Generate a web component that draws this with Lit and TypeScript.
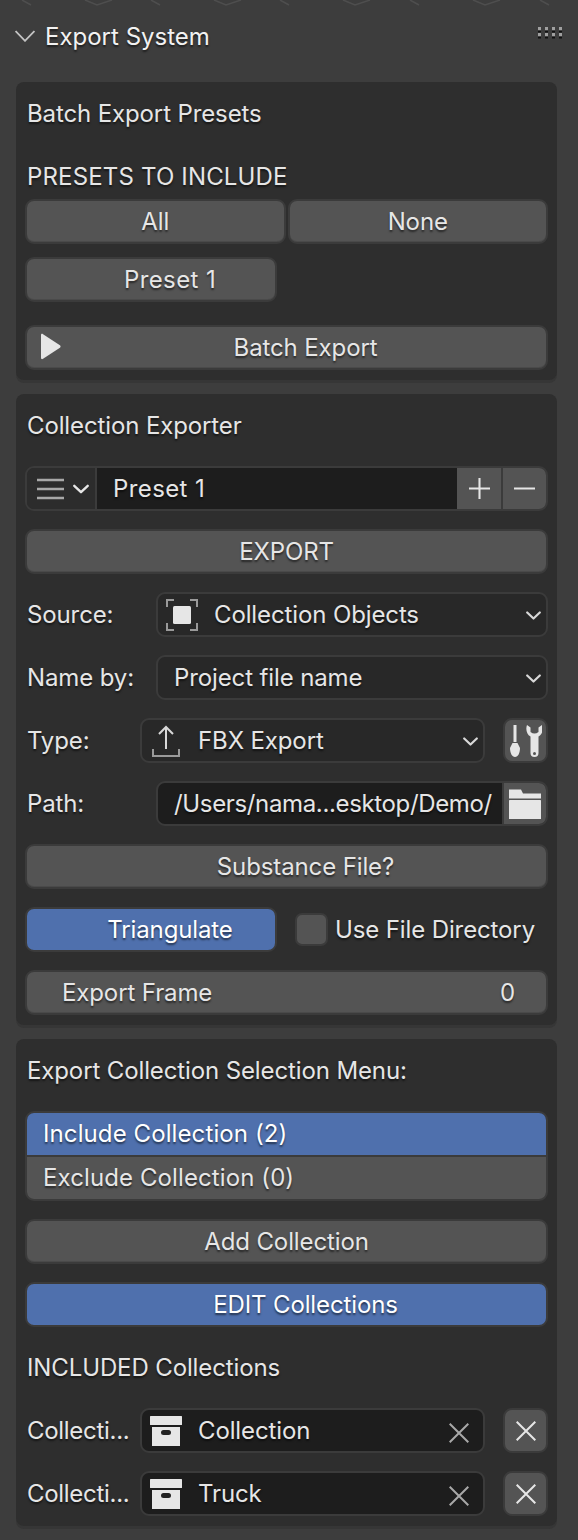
import { LitElement, css, html, svg } from "lit";
import { customElement } from "lit/decorators.js";

const chevron = svg`<path d="M1.200 1.500 7.500 7.500 13.800 1.500" fill="none" stroke="currentColor" stroke-width="2.200" stroke-linecap="round" stroke-linejoin="round"/>`;

const archiveIcon = html`<svg class="ico" viewBox="0 0 32 32" width="32" height="32">
  <rect x="0" y="1" width="32" height="9" rx="0.500" fill="#e6e6e6"/>
  <path d="M2 12h28v19H2z" fill="#e6e6e6"/>
  <rect x="11" y="15" width="10" height="5" rx="2.500" fill="#222"/>
</svg>`;

const closeIcon = html`<svg viewBox="0 0 20 20" width="20" height="20">
  <path d="M.7.7 19.300 19.300M19.300.7.7 19.300" stroke="currentColor" stroke-width="2" fill="none"/>
</svg>`;

const caret = html`<svg class="caret" viewBox="0 0 15 9" width="15" height="9">${chevron}</svg>`;

@customElement("app-root")
export class AppRoot extends LitElement {
  static styles = css`
    :host {
      display: block;
      width: 578px;
      height: 1540px;
      overflow: hidden;
      position: relative;
      background: #3d3d3d;
      font-family: Inter, "Liberation Sans", sans-serif;
      font-size: 24px;
      letter-spacing: -0.12px;
      color: #e6e6e6;
      text-shadow: 0 2px 2px rgba(0, 0, 0, 0.55);
    }
    * {
      box-sizing: border-box;
    }
    .strip {
      position: absolute;
      left: 0;
      top: 0;
      display: block;
    }
    .header {
      height: 82px;
      padding: 0 16px 10px 15px;
      display: flex;
      align-items: center;
      gap: 10px;
      letter-spacing: 0;
      color: #f2f2f2;
    }
    .header .grip {
      margin-left: auto;
      margin-top: -6px;
    }
    .panel {
      margin: 0 21px 14px 16px;
      padding: 9px 9px 10px 9px;
      background: #2e2e2e;
      border-radius: 8px;
      box-shadow: 0 3px 0 #363636;
      display: flex;
      flex-direction: column;
      gap: 18px;
    }
    .title,
    .row,
    .btn {
      height: 45px;
    }
    .title {
      display: flex;
      align-items: center;
      padding-left: 2px;
    }
    .caps {
      letter-spacing: 0.16px;
    }
    .row {
      display: flex;
      align-items: center;
    }
    .btn {
      flex: 1;
      display: flex;
      align-items: center;
      justify-content: center;
      background: #545454;
      border: 2px solid #3b3b3b;
      border-radius: 9px;
      box-shadow: inset 0 -1px 0 #4a4a4a;
      position: relative;
    }
    .btn.on {
      background: #4f70ad;
      color: #fff;
      box-shadow: none;
    }
    .btn.shift {
      padding-left: 38px;
    }
    .pair {
      gap: 2px;
      margin-top: -18px;
    }
    .half {
      flex: none;
      width: 252px;
    }
    .tight {
      margin-top: -5px;
    }
    .wide {
      margin-top: 5px;
    }
    .wider {
      letter-spacing: 0.4px;
    }
    .play {
      position: absolute;
      left: 12px;
      top: 6px;
    }
    .label {
      flex: none;
      padding-left: 2px;
    }
    .w131 {
      width: 131px;
    }
    .w115 {
      width: 115px;
    }
    .cut {
      letter-spacing: -0.3px;
    }
    .field {
      flex: 1;
      min-width: 0;
      height: 45px;
      display: flex;
      align-items: center;
      background: #282828;
      border: 2px solid #3b3b3b;
      border-radius: 9px;
      padding-left: 16px;
      position: relative;
      white-space: nowrap;
    }
    .field.ink {
      background: #1d1d1d;
    }
    .field.iconic {
      padding-left: 8px;
      gap: 16px;
    }
    .caret {
      position: absolute;
      right: 5px;
      top: 17px;
      color: #d8d8d8;
    }
    .ico {
      flex: none;
    }
    .square {
      flex: none;
      width: 45px;
      height: 45px;
      margin-left: 18px;
      background: #545454;
      border: 2px solid #3b3b3b;
      border-radius: 9px;
      display: flex;
      align-items: center;
      justify-content: center;
    }
    .clear {
      position: absolute;
      right: 14px;
      top: 10px;
      height: 20px;
      color: #a8a8a8;
    }
    .list {
      flex: 1;
      height: 45px;
      display: flex;
      align-items: stretch;
      border: 2px solid #3b3b3b;
      border-radius: 9px;
      overflow: hidden;
    }
    .list > div {
      display: flex;
      align-items: center;
      justify-content: center;
      background: #545454;
    }
    .list > .menu {
      flex: none;
      width: 70px;
      gap: 9px;
      padding-left: 4px;
      background: #2c2c2c;
      border-right: 2px solid #3b3b3b;
    }
    .list > .name {
      flex: 1;
      justify-content: flex-start;
      padding-left: 16px;
      background: #1d1d1d;
    }
    .list > .op {
      flex: none;
      width: 44px;
    }
    .list > .op + .op {
      width: 45px;
      border-left: 2px solid #3b3b3b;
    }
    .path {
      padding-right: 44px;
      overflow: hidden;
      letter-spacing: -0.35px;
    }
    .folder {
      position: absolute;
      right: 0;
      top: 0;
      bottom: 0;
      width: 44px;
      display: flex;
      align-items: center;
      justify-content: center;
      background: #545454;
      border-left: 2px solid #3b3b3b;
    }
    .check {
      flex: none;
      width: 33px;
      height: 33px;
      margin: 0 7px 0 18px;
      background: #545454;
      border: 2px solid #3b3b3b;
      border-radius: 7px;
    }
    .number {
      justify-content: space-between;
      padding: 0 31px 0 35px;
    }
    .tabs {
      height: 90px;
      display: flex;
      flex-direction: column;
      border: 2px solid #3b3b3b;
      border-radius: 9px;
      overflow: hidden;
      letter-spacing: 0.1px;
    }
    .tabs div {
      flex: 1;
      display: flex;
      align-items: center;
      padding: 0 0 2px 16px;
      background: #545454;
    }
    .tabs .on {
      background: #4f70ad;
      color: #fff;
      border-bottom: 2px solid #3b3b3b;
    }
  `;

  render() {
    const offsets = [22, 151, 280, 410, 540];
    return html`
      <svg class="strip" width="578" height="8" viewBox="0 0 578 8">
        ${offsets.map(
          (x) => svg`<path d="M${x} 0 L${x + 9} 5 M${x + 63} 0 L${x + 75} 5 L${x + 90} 0" fill="none" stroke="#4e4e4e" stroke-width="1.500"/>`
        )}
      </svg>

      <div class="header">
        <svg viewBox="0 0 20 12" width="20" height="12">
          <path d="M.6 1 10 10.800 19.400 1" fill="none" stroke="#c4c4c4" stroke-width="1.800"/>
        </svg>
        <span>Export System</span>
        <svg class="grip" viewBox="0 0 24 12" width="24" height="12">
          ${[0, 7, 14, 21].flatMap((x) =>
            [0, 6].flatMap((y) => [
              svg`<rect x=${x} y=${y} width="3" height="3.500" fill="#a0a0a0"/>`,
              svg`<rect x=${x} y=${y + 3.5} width="3" height="2" fill="#111"/>`,
            ])
          )}
        </svg>
      </div>

      <section class="panel">
        <div class="title">Batch Export Presets</div>
        <div class="title caps">PRESETS TO INCLUDE</div>
        <div class="row pair">
          <div class="btn">All</div>
          <div class="btn">None</div>
        </div>
        <div class="row tight"><div class="btn half shift wider">Preset 1</div></div>
        <div class="row wide">
          <div class="btn shift">
            <svg class="play" viewBox="0 0 24 30" width="22" height="27">
              <path d="M2 2.500C2 1 3 .5 4.300 1.300L23 13.500C24 14.300 24 15.700 23 16.500L4.300 28.700C3 29.500 2 29 2 27.500z" fill="#e6e6e6"/>
            </svg>
            Batch Export
          </div>
        </div>
      </section>

      <section class="panel">
        <div class="title">Collection Exporter</div>
        <div class="row">
          <div class="list">
            <div class="menu">
              <svg viewBox="0 0 27 22" width="27" height="22">
                <path d="M0 2h27M0 11h27M0 20h27" stroke="#a8a8a8" stroke-width="2.500"/>
              </svg>
              <svg viewBox="0 0 15 9" width="16" height="10">${chevron}</svg>
            </div>
            <div class="name wider">Preset 1</div>
            <div class="op">
              <svg viewBox="0 0 20 20" width="21" height="21"><path d="M10 0v20M0 10h20" stroke="#e6e6e6" stroke-width="2"/></svg>
            </div>
            <div class="op">
              <svg viewBox="0 0 20 20" width="21" height="21"><path d="M0 10h20" stroke="#e6e6e6" stroke-width="2"/></svg>
            </div>
          </div>
        </div>
        <div class="row"><div class="btn">EXPORT</div></div>
        <div class="row">
          <span class="label w131">Source:</span>
          <div class="field iconic">
            <svg class="ico" viewBox="0 0 32 32" width="32" height="32">
              <path d="M1 8V1h7M24 1h7v7M31 24v7h-7M8 31H1v-7" fill="none" stroke="#9a9a9a" stroke-width="2"/>
              <rect x="7" y="7" width="18" height="18" rx="1.500" fill="#e6e6e6"/>
            </svg>
            <span>Collection Objects</span>
            ${caret}
          </div>
        </div>
        <div class="row">
          <span class="label w131">Name by:</span>
          <div class="field">Project file name${caret}</div>
        </div>
        <div class="row">
          <span class="label w115">Type:</span>
          <div class="field iconic">
            <svg class="ico" viewBox="0 0 32 32" width="32" height="32">
              <path d="M16 2v22M9 9l7-7 7 7" fill="none" stroke="#d8d8d8" stroke-width="2"/>
              <path d="M3 24v7h26v-7" fill="none" stroke="#9a9a9a" stroke-width="2"/>
            </svg>
            <span>FBX Export</span>
            ${caret}
          </div>
          <div class="square">
            <svg viewBox="0 0 32 32" width="32" height="32">
              <rect x="3.500" y="0" width="3" height="17" fill="#e6e6e6"/>
              <path d="M2.500 18h5L10 23c0 5-2 9-5 9s-5-4-5-9z" fill="#e6e6e6"/>
              <path d="M17 0C15.500 4 16.500 9.500 20.500 11.500V28A4 4 0 0 0 28.500 28V11.500C32.500 9.500 33.500 4 32 0L28.500 2.500V7Q24.500 10 20.500 7V2.500Z" fill="#e6e6e6"/>
              <circle cx="24.500" cy="28.500" r="1.500" fill="#545454"/>
            </svg>
          </div>
        </div>
        <div class="row">
          <span class="label w131">Path:</span>
          <div class="field ink path">
            <span>/Users/nama...esktop/Demo/</span>
            <div class="folder">
              <svg viewBox="0 0 32 30" width="32" height="30">
                <path d="M0 .5h12l2 4h18v5H0z" fill="#e6e6e6"/>
                <rect x="0" y="11" width="32" height="19" rx="0.500" fill="#e6e6e6"/>
              </svg>
            </div>
          </div>
        </div>
        <div class="row"><div class="btn shift">Substance File?</div></div>
        <div class="row">
          <div class="btn half on shift">Triangulate</div>
          <div class="check"></div>
          <span>Use File Directory</span>
        </div>
        <div class="row"><div class="btn number"><span>Export Frame</span><span>0</span></div></div>
      </section>

      <section class="panel">
        <div class="title">Export Collection Selection Menu:</div>
        <div class="tabs">
          <div class="on">Include Collection (2)</div>
          <div>Exclude Collection (0)</div>
        </div>
        <div class="row"><div class="btn">Add Collection</div></div>
        <div class="row"><div class="btn on shift">EDIT Collections</div></div>
        <div class="title">INCLUDED Collections</div>
        <div class="row">
          <span class="label w115 cut">Collecti...</span>
          <div class="field ink iconic">${archiveIcon}<span>Collection</span><span class="clear">${closeIcon}</span></div>
          <div class="square">${closeIcon}</div>
        </div>
        <div class="row">
          <span class="label w115 cut">Collecti...</span>
          <div class="field ink iconic">${archiveIcon}<span>Truck</span><span class="clear">${closeIcon}</span></div>
          <div class="square">${closeIcon}</div>
        </div>
      </section>
    `;
  }
}
